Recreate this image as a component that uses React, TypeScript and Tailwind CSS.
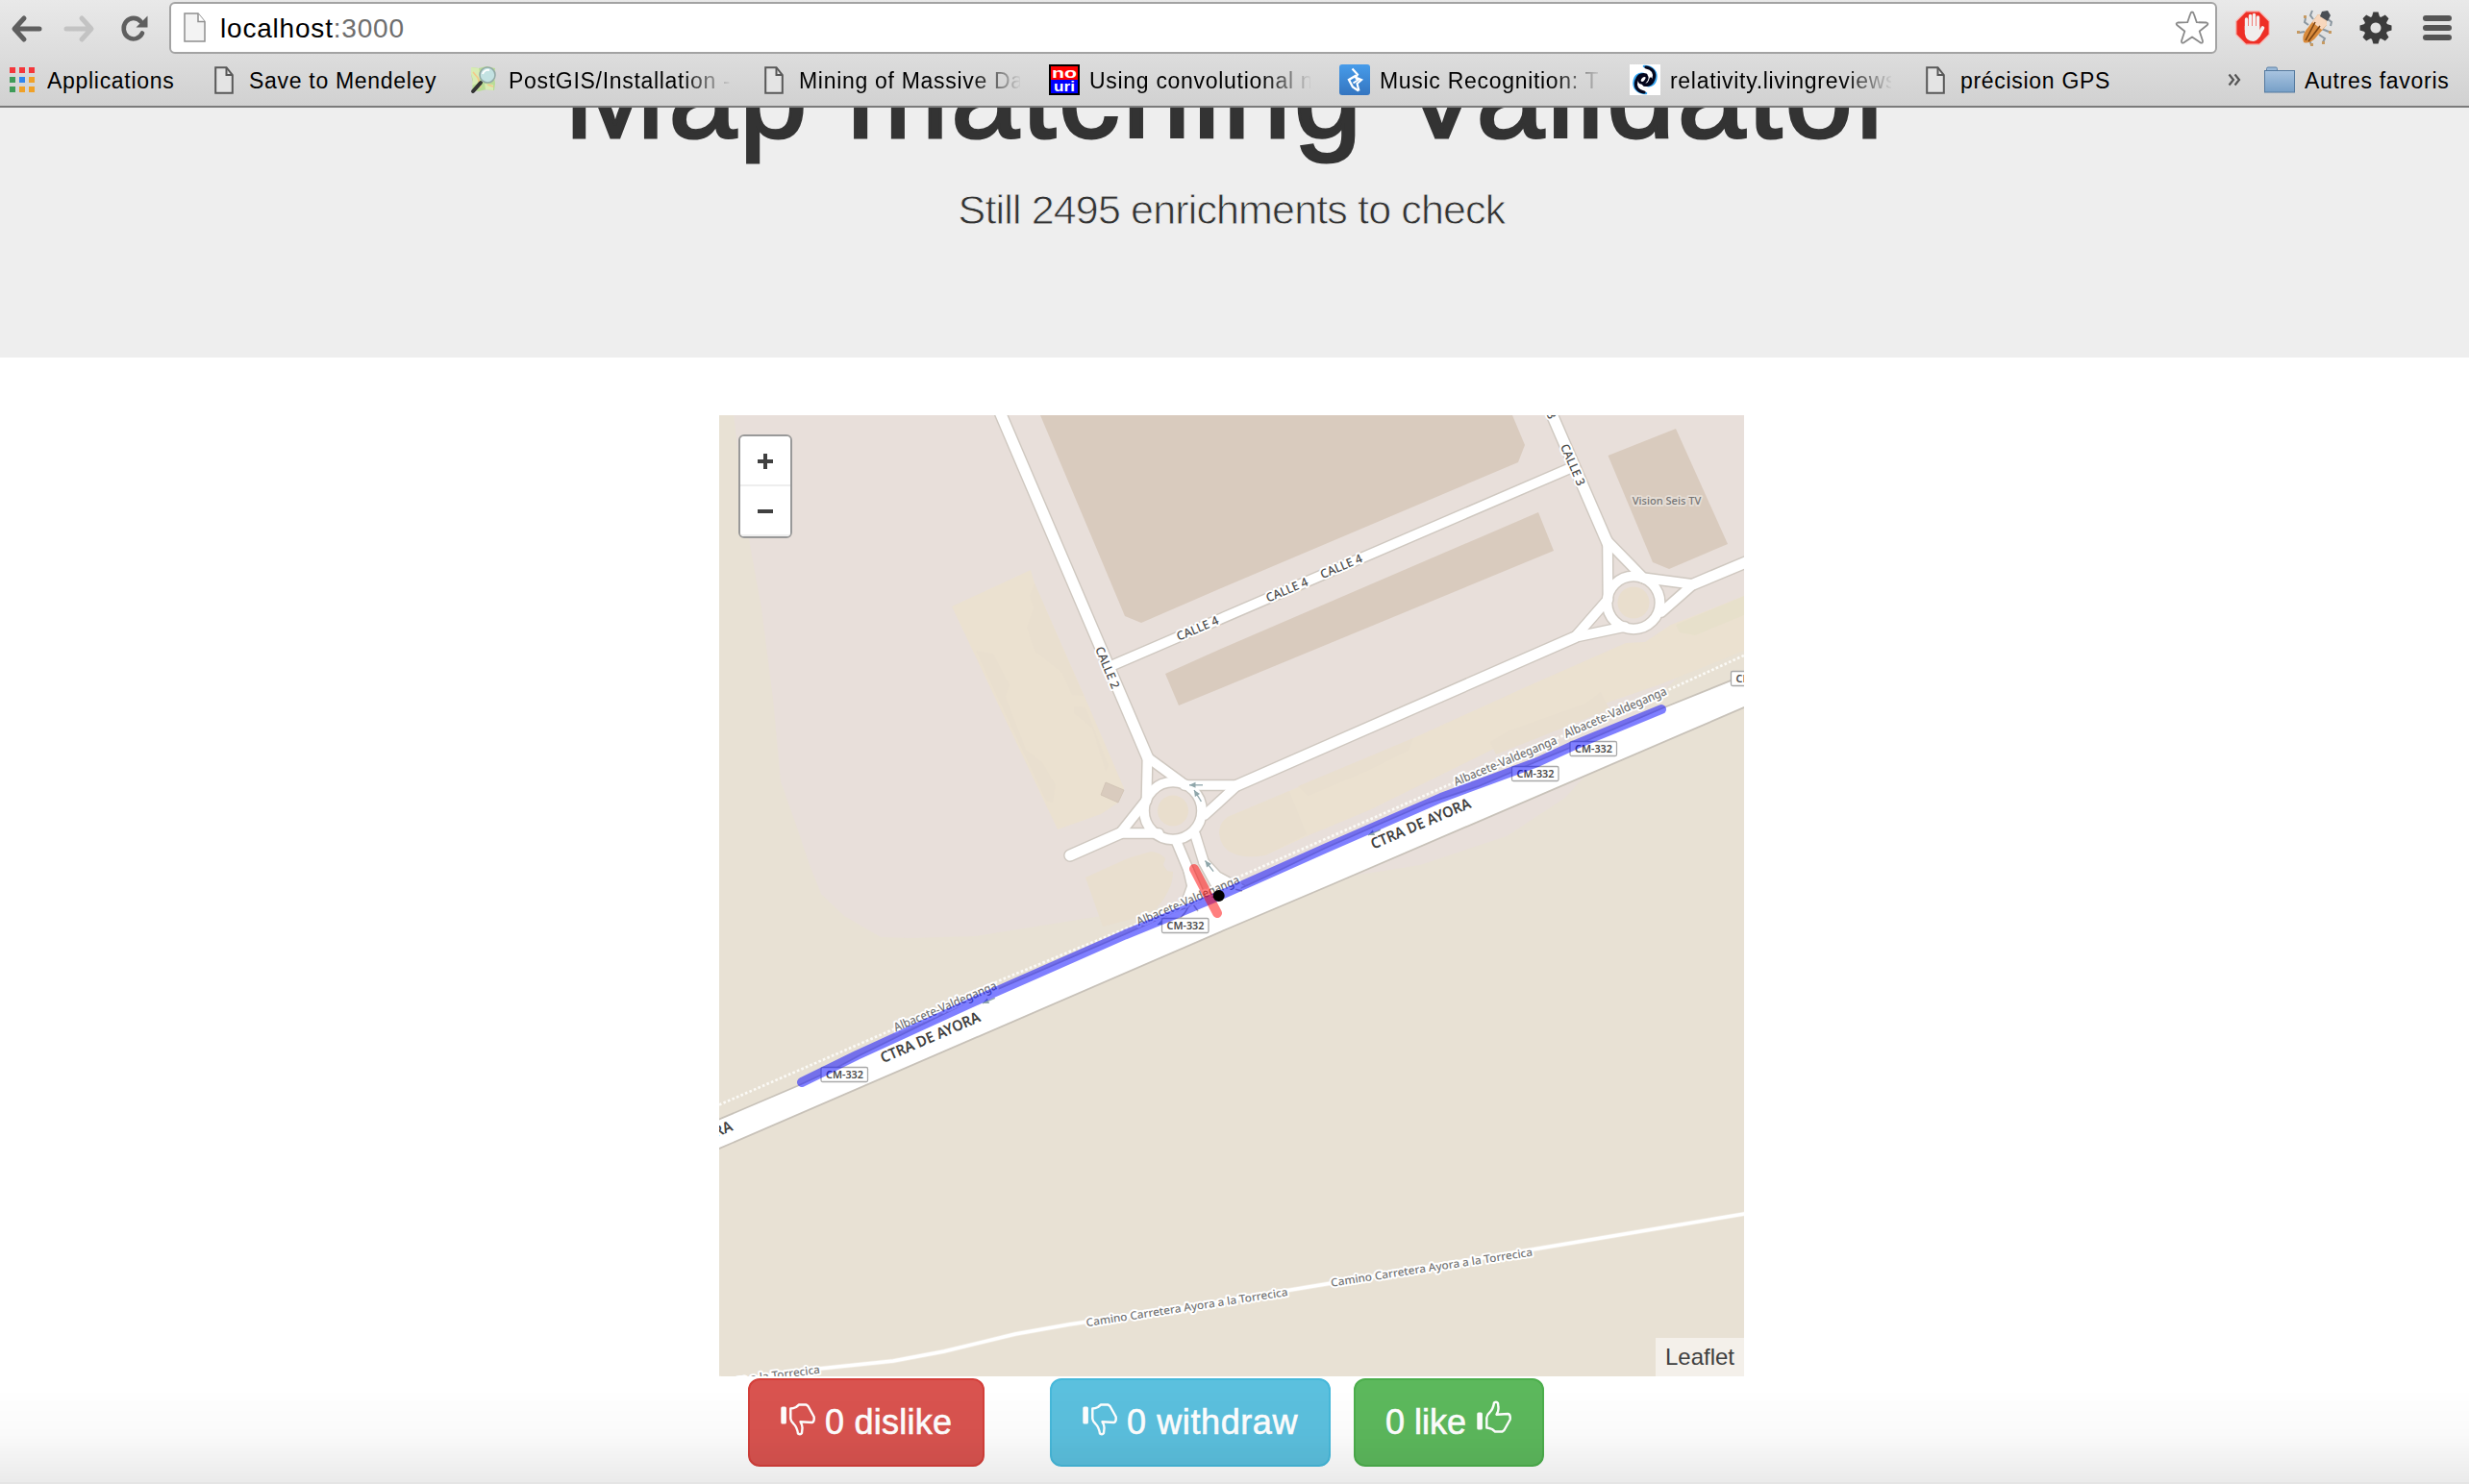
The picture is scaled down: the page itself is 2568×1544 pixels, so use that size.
import React from "react";

const SANS = "font-['Liberation_Sans',Arial,sans-serif]";

/* ---------- toolbar icons ---------- */

const DocIcon = () => (
  <svg width="20" height="29" viewBox="0 0 20 29" fill="#e4e4e4" stroke="#585858" strokeWidth="2">
    <path d="M1.2 1.2H12.5L18.8 9V27.8H1.2Z" />
    <path d="M12.5 1.2V9H18.8" fill="none" />
  </svg>
);

const AppsIcon = () => (
  <svg width="26" height="26" viewBox="0 0 26 26">
    {[
      ["#f4373b", "#f4373b", "#f4373b"],
      ["#3e9b58", "#2f86f0", "#f0a128"],
      ["#3e9b58", "#f0a128", "#f0a128"],
    ].map((row, r) =>
      row.map((c, i) => <rect key={`${r}-${i}`} x={i * 10} y={r * 10} width="6" height="6" fill={c} />),
    )}
  </svg>
);

const MapLensIcon = () => (
  <svg width="32" height="32" viewBox="0 0 32 32">
    <path d="M3 3l8 1 8-2 9 2-1 8 1 8-1 7-8-1-8 2-7-1 1-8-2-8z" fill="#b9dc95" />
    <path d="M3 3l8 1 2 8-4 8-5 2 1-6-2-6zM17 20l9 1v6l-8-1z" fill="#d8ecb4" />
    <path d="M5 8l5 6 3 10M20 21l6 2" stroke="#f4c98a" strokeWidth="1.6" fill="none" />
    <path d="M13 19L5 28" stroke="#333" strokeWidth="4" strokeLinecap="round" />
    <circle cx="20" cy="11" r="8" fill="#c3e2e6" fillOpacity="0.95" stroke="#93a9a6" strokeWidth="1.6" />
    <path d="M15 10a6 6 0 0 1 7-4" stroke="#fff" strokeWidth="2" fill="none" />
  </svg>
);

const NouriIcon = () => (
  <svg width="32" height="32" viewBox="0 0 32 32">
    <rect width="32" height="32" fill="#000" />
    <rect x="2" y="2" width="28" height="14" fill="#f00" />
    <rect x="2" y="16" width="28" height="14" fill="#00f" />
    <g fill="#fff" fontFamily="Liberation Sans" fontWeight="700">
      <text x="3" y="13.500" fontSize="15" textLength="26" lengthAdjust="spacingAndGlyphs">no</text>
      <text x="5" y="27.500" fontSize="14" textLength="22" lengthAdjust="spacingAndGlyphs">uri</text>
    </g>
  </svg>
);

const MusicIcon = () => (
  <svg width="32" height="32" viewBox="0 0 32 32">
    <defs>
      <linearGradient id="mus" x1="0" y1="0" x2="0" y2="1">
        <stop offset="0" stopColor="#479cea" />
        <stop offset="1" stopColor="#3475c0" />
      </linearGradient>
    </defs>
    <rect width="32" height="32" rx="3" fill="url(#mus)" />
    <path d="M13.500 4.500L19 10.500L17 13.500L23 16L18.500 20L20.500 27.500" fill="none" stroke="#fff" strokeWidth="2.200" />
    <path d="M17.500 11.500L10 16L14 23.500L20 27.500" fill="none" stroke="#fff" strokeWidth="2.400" />
    <path d="M17 14.500L19.500 16L14.500 19.500" fill="none" stroke="#fff" strokeWidth="2" />
  </svg>
);

const SwirlIcon = () => (
  <svg width="32" height="32" viewBox="0 0 32 32">
    <rect width="32" height="32" fill="#fff" />
    <g fill="none" strokeLinecap="round">
      <path d="M15 2c9 0 14 6 12 14-2 7-8 7-11 5" stroke="#35a6f2" strokeWidth="2.6" />
      <path d="M17 30C8 30 3 24 5 16c2-7 8-7 11-5" stroke="#35a6f2" strokeWidth="2.6" />
      <path d="M17 3c7 1 10 6 8 12-2 6-6 7-10 6" stroke="#04061c" strokeWidth="3.2" />
      <path d="M15 29c-7-1-10-6-8-12 2-6 6-7 10-6" stroke="#04061c" strokeWidth="3.2" />
      <path d="M10 17c1-5 5-6 7-5s1 4-1 6-5 2-6-1zM22 15c-1 5-4 7-7 6" stroke="#04061c" strokeWidth="3" />
    </g>
  </svg>
);

const FolderIcon = () => (
  <svg width="32" height="28" viewBox="0 0 32 28">
    <defs>
      <linearGradient id="fold" x1="0" y1="0" x2="0" y2="1">
        <stop offset="0" stopColor="#a9c4e0" />
        <stop offset="1" stopColor="#769fc7" />
      </linearGradient>
    </defs>
    <path d="M2.5 5V2.5Q2.5 1 4 1H12Q13.5 1 13.5 2.500V5" fill="#9bb9d8" stroke="#5f83a8" />
    <rect x="0.5" y="4.500" width="31" height="22.500" fill="url(#fold)" stroke="#557a9f" />
  </svg>
);

const Bug = () => (
  <svg width="40" height="40" viewBox="0 0 40 40">
    <g stroke="#8b97a0" strokeWidth="2" fill="none">
      <path d="M13 17l-4-3 1-4M18 11l-3-4 2-5M9 24l-6 1M14 32l2 6M24 27l6 4-2 4M27 21l7 3M32 10l5 4-1 4" />
    </g>
    <path d="M23 6q10 2 9 11L19 32q-6 5-11 3-2-6 2-12z" fill="#d98b3c" />
    <path d="M23 6q10 2 9 11l-5 5-10-8z" fill="#f7d7bd" />
    <path d="M20 14L10 33M25 18L13 34" stroke="#7a4413" strokeWidth="1.600" />
    <path d="M27 3l6-1 3 5-3 6-8-5z" fill="#4a4f55" />
    <g fill="#c69a62">
      <rect x="1" y="23" width="3" height="3" />
      <rect x="15" y="36" width="3" height="3" />
      <rect x="27" y="34" width="3" height="3" />
      <rect x="34" y="23" width="3" height="3" />
      <rect x="8" y="7" width="3" height="3" />
    </g>
  </svg>
);

const Gear = () => (
  <svg width="34" height="34" viewBox="-17 -17 34 34">
    <g fill="#3c3c3c">
      {[0, 45, 90, 135, 180, 225, 270, 315].map((a) => (
        <path key={a} d="M-4.500 -10L-2.600 -16.500H2.600L4.500 -10Z" transform={`rotate(${a})`} />
      ))}
      <path fillRule="evenodd" d="M0-12.500a12.500 12.500 0 1 0 .01 0ZM0-5.500a5.500 5.500 0 1 1-.01 0Z" />
    </g>
  </svg>
);

const Hand = () => (
  <svg width="36" height="36" viewBox="0 0 36 36">
    <path d="M11 .8H25L35.200 11V25L25 35.200H11L.8 25V11Z" fill="#ee2f26" stroke="#f8b8b4" strokeWidth="1.200" />
    <g stroke="#f3f1f0" strokeWidth="3.400" strokeLinecap="round" fill="none">
      <path d="M11.500 9V20M15.500 5.500V18M19.500 4.500V18M23.500 7V20" />
      <path d="M28.500 18L24 26" strokeWidth="3.600" />
    </g>
    <path d="M9.800 16H25.200V22L28 20Q25 31 19 32Q11 32 9.800 24Z" fill="#f0eeed" />
  </svg>
);

/* ---------- bookmark bar ---------- */

const BOOKMARKS = [
  { label: "PostGIS/Installation -", icon: <MapLensIcon />, fade: true },
  { label: "Mining of Massive Dat", icon: <DocIcon />, fade: true },
  { label: "Using convolutional n", icon: <NouriIcon />, fade: true },
  { label: "Music Recognition: T", icon: <MusicIcon />, fade: true },
  { label: "relativity.livingreviews", icon: <SwirlIcon />, fade: true },
  { label: "précision GPS", icon: <DocIcon />, fade: false },
];

const FADE = "[mask-image:linear-gradient(to_right,black_78%,transparent_101%)]";

function Bookmark({ icon, label, width, fade }: { icon: React.ReactNode; label: string; width: string; fade?: boolean }) {
  return (
    <div className={`flex shrink-0 items-center ${width}`}>
      <span className="flex w-8 shrink-0 justify-center">{icon}</span>
      <span
        className={`mt-0.5 ml-2.5 overflow-hidden text-[23px] leading-8 tracking-[0.7px] whitespace-nowrap text-black ${fade ? `w-[230px] ${FADE}` : ""}`}
      >
        {label}
      </span>
    </div>
  );
}

function BrowserChrome() {
  return (
    <header className="flex h-28 shrink-0 flex-col border-b-2 border-[#7b7b7b] bg-linear-to-b from-[#e9e9e9] to-[#d1d1d1]">
      <div className="flex h-14 items-start">
        <div className="flex h-14 w-44 items-center pt-1 pl-[11px]">
          <svg width="34" height="30" viewBox="0 0 34 30" fill="none" stroke="#5f5f5f" strokeWidth="5" strokeLinecap="round" strokeLinejoin="round">
            <path d="M14 4L4 15L14 26M4.500 15H30" />
          </svg>
          <svg className="ml-5" width="34" height="30" viewBox="0 0 34 30" fill="none" stroke="#c3c3c3" strokeWidth="5" strokeLinecap="round" strokeLinejoin="round">
            <path d="M20 4L30 15L20 26M29.500 15H4" />
          </svg>
          <svg className="ml-[26px]" width="30" height="30" viewBox="0 0 30 30">
            <path d="M23 19.500A10.200 10.800 0 1 1 21.500 7.500" fill="none" stroke="#5f5f5f" strokeWidth="4.600" strokeLinecap="round" />
            <path d="M28.500 1.500V13.500H16.500Z" fill="#5f5f5f" />
          </svg>
        </div>
        <div className="mt-0.5 flex h-[54px] w-[2130px] items-center rounded-md border-2 border-[#a3a3a3] bg-white pl-[13px]">
          <svg width="24" height="32" viewBox="0 0 24 32" fill="#f3f3f3" stroke="#8f8f8f" strokeWidth="1.500">
            <path d="M1 1H15L22 9.500V30H1Z" />
            <path d="M15 1V9.500H22" fill="#fff" />
          </svg>
          <span className="mt-0.5 ml-3.5 text-[28px] leading-8 tracking-[0.8px] text-black">
            localhost<span className="text-[#6e6e6e]">:3000</span>
          </span>
          <svg className="mr-1.5 ml-auto" width="36" height="36" viewBox="0 0 36 36" fill="#fff" stroke="#8a8a8a" strokeWidth="1.800" strokeLinejoin="round">
            <path d="M18 1.500Q19.300 1.500 20 4L22.800 12.200L33 12.500Q35.500 13.200 33.500 15.300L25.700 21.500L29 31.500Q29.300 34.500 26.500 33.300L18 27.500L9.500 33.300Q6.700 34.500 7 31.500L10.300 21.500L2.500 15.300Q.5 13.200 3 12.500L13.200 12.200L16 4Q16.700 1.500 18 1.500Z" />
          </svg>
        </div>
        <div className="flex h-14 flex-1 items-center pt-0.5 pl-[19px]">
          <Hand />
          <span className="ml-[27px]"><Bug /></span>
          <span className="ml-[26px]"><Gear /></span>
          <span className="ml-8 flex w-[30px] flex-col gap-1">
            <i className="h-1.5 rounded-full bg-[#555]" />
            <i className="h-1.5 rounded-full bg-[#555]" />
            <i className="h-1.5 rounded-full bg-[#555]" />
          </span>
        </div>
      </div>
      <nav className="flex h-[54px] items-center pl-[7px]">
        <Bookmark icon={<AppsIcon />} label="Applications" width="w-[210px]" />
        <Bookmark icon={<DocIcon />} label="Save to Mendeley" width="w-[270px]" />
        {BOOKMARKS.map((b) => (
          <Bookmark key={b.label} icon={b.icon} label={b.label} fade={b.fade} width="w-[302px]" />
        ))}
        <svg className="ml-[18px]" width="14" height="14" viewBox="0 0 14 14" fill="none" stroke="#555" strokeWidth="2.200">
          <path d="M1.500 1.500L6 7L1.500 12.500M7.500 1.500L12 7L7.500 12.500" />
        </svg>
        <div className="ml-6 flex">
          <Bookmark icon={<FolderIcon />} label="Autres favoris" width="w-[213px]" />
        </div>
      </nav>
    </header>
  );
}

/* ---------- map ---------- */

type LabelProps = {
  x: number;
  y: number;
  a: number;
  len: number;
  size: number;
  children: string;
  color?: string;
  weight?: number;
  halo?: string;
};

function Label({ x, y, a, len, size, children, color = "#4b4b4b", weight = 500, halo = "#fff" }: LabelProps) {
  return (
    <text
      transform={`translate(${x} ${y}) rotate(${a})`}
      y={size * 0.36}
      textAnchor="middle"
      fontSize={size}
      fontWeight={weight}
      textLength={len}
      lengthAdjust="spacingAndGlyphs"
      fill={color}
      stroke={halo}
      strokeWidth="4"
      strokeLinejoin="round"
      paintOrder="stroke"
    >
      {children}
    </text>
  );
}

const WIDE = [
  "M1038 424L1193.500 788",
  "M1287 817L1638 663",
  "M1113 890L1165 867",
  "M1611 424L1672 565",
  "M1761 608L1830 579",
];
const MID = [
  "M1153 694L1638 485",
  "M1193.500 788L1192.500 833",
  "M1193.500 788L1229 814",
  "M1287 817H1232",
  "M1287 817L1253 848",
  "M1165 867L1192 833",
  "M1165 867H1205",
  "M1223 874L1236 905L1240 922L1230 950",
  "M1236 905L1256 950",
  "M1243 868L1252 897L1266 912L1292 926",
  "M1252 897L1270 930",
  "M1672 563L1672.500 624",
  "M1672 563L1710 602",
  "M1708 601L1761 608L1728 637",
  "M1638 663L1672 624",
  "M1638 663L1690 652",
];

const UPPER = "M740 1168L829 1130L869 1111.500L895 1097.500L1009 1041.500L1170 972L1220 949.500L1293 923L1316 912.500L1377 883L1431 859L1484 836L1538 818L1599 792L1640 775L1731 736L1820 700";
const LOWER = "M740 1198.500L1280 965L1386 920L1820 733.500";

const SHIELDS: [number, number][] = [
  [854, 1110.500],
  [1208.500, 955.500],
  [1572.500, 797.500],
  [1633, 771.500],
];

function Arrow({ x, y, a, c = "#8fa6aa" }: { x: number; y: number; a: number; c?: string }) {
  return (
    <g transform={`translate(${x} ${y}) rotate(${a})`}>
      <path d="M0 0H14" stroke={c} strokeWidth="1.300" />
      <path d="M0 0L6.500 -3V3Z" fill={c} />
    </g>
  );
}

function MapDrawing() {
  return (
    <svg className="block" width="1066" height="1000" viewBox="748 432 1066 1000" fontFamily="'Noto Sans', 'Open Sans', sans-serif">
      <rect x="748" y="432" width="1066" height="1000" fill="#e8e1d4" />
      <path
        d="M763 432L780 567L792 633L804 727L812 813L831 867L842 900L854 930L878 953L916 975L947 976L1015 974L1146 953L1433 907L1477 900L1567 870L1628 830L1700 750L1814 635V432Z"
        fill="#e8dfda"
      />
      <g fill="#ebe1d0">
        <path d="M990 631L1072 593L1076 607L1129 727L1169 820L1163 835L1145 847L1100 863Z" />
        <path d="M1268 867L1270 858L1277 850L1341 823L1470 768L1591 713L1691 669L1711 668L1738 650L1814 620V677L1727 712L1666 733L1552 780L1424 843L1359 870L1316 890L1295 891L1277 882Z" />
      </g>
      <g fill="#e9dfcf">
        <path d="M1129 913L1173 893L1197 886Q1207 887 1212 893L1210 900L1214 906L1220 907Q1220 918 1215 927Q1207 944 1193 952L1147 964Z" />
        <path d="M1268 867Q1268 856 1277 850L1341 823L1359 868L1316 890Q1302 892 1295 891Q1270 888 1268 867Z" />
        <path d="M1076 607L1071 620L1075 633L1068 653L1076 677L1105 700L1115 723L1127 724Z" />
        <path d="M1015 677L1033 680L1050 713L1046 725L1067 780L1084 793L1098 817L1095 835L1088 833Z" />
        <path d="M1117 735L1129 736L1153 797L1150 803L1136 757L1117 742Z" />
        <path d="M1550 772L1570 760L1649 732L1665 720L1674 738L1556 785Z" />
        <path d="M1350 818L1470 768L1466 780L1420 803L1361 828Z" />
      </g>
      <path d="M1743 650L1814 620V640L1763 661L1747 658Z" fill="#e7e0cb" />

      <g fill="#d9cbbe">
        <path d="M1082 432L1136 560L1170 641L1187 648L1270 612L1579 481L1586 463L1573 432Z" />
        <path d="M1212 701L1226 734L1270 716L1616 573L1600 533L1270 675Z" />
        <path d="M1672.500 474L1743 446L1797 566L1736 592L1719 585Z" />
        <path d="M1150 814L1169 822L1163 835L1145 827Z" stroke="#cfc1b3" strokeWidth="0.800" />
      </g>

      <g fill="none" strokeLinecap="round" strokeLinejoin="round">
        <g stroke="#cfc8c0">
          <g strokeWidth="13.800">
            {WIDE.map((d) => <path key={d} d={d} />)}
          </g>
          <g strokeWidth="12.500">
            {MID.map((d) => <path key={d} d={d} />)}
            <circle cx="1220" cy="843.500" r="30" />
            <circle cx="1699" cy="627" r="27.500" />
          </g>
        </g>
        <path d="M1236 905L1256 950L1270 930L1252 900L1292 922L1292 940L1225 956L1240 925Z" fill="#fff" stroke="none" />
        <g stroke="#fff">
          <g strokeWidth="11">
            {WIDE.map((d) => <path key={d} d={d} />)}
          </g>
          <g strokeWidth="9.600">
            {MID.map((d) => <path key={d} d={d} />)}
            <circle cx="1220" cy="843.500" r="30" />
            <circle cx="1699" cy="627" r="27.500" />
          </g>
        </g>
      </g>
      <g fill="#e9decd">
        <circle cx="1220" cy="843.500" r="16" />
        <circle cx="1699" cy="627" r="16.500" />
      </g>

      <path d="M748 1149.500L929 1071L1040 1020L1181 962L1287 913L1506 817L1620 768L1737 717L1816 681" fill="none" stroke="#fbfaf6" strokeWidth="2.600" strokeDasharray="2.600 2.300" />

      <path d={`${UPPER}L1820 733.500L1386 920L1280 965L740 1198.500Z`} fill="#fff" />
      <g fill="none" stroke="#c8c2b9" strokeWidth="1.800">
        <path d={UPPER} />
        <path d={LOWER} />
      </g>
      <path d="M1234 945L1250 938L1292 920L1290 926L1262 942L1230 956Z" fill="#fff" />
      <path d="M1223 959Q1235 950 1238 938M1239 938L1246 948M1284 925L1292 927" fill="none" stroke="#b9b3aa" strokeWidth="1.500" />

      <path d="M1820 1262L1594 1300L1385 1335L1240 1359L1112 1378L1056 1388L982 1406L929 1416L852 1424L780 1434" fill="none" stroke="#f1ece3" strokeWidth="5" />
      <path d="M1820 1262L1594 1300L1385 1335L1240 1359L1112 1378L1056 1388L982 1406L929 1416L852 1424L780 1434" fill="none" stroke="#fff" strokeWidth="3.400" />

      <Arrow x={1237} y={816.800} a={0} />
      <Arrow x={1242} y={822} a={58} />
      <Arrow x={1253.500} y={895.500} a={52} />
      <Arrow x={1022} y={1044} a={-24} />
      <Arrow x={1204} y={962} a={-24} />
      <Arrow x={1423} y={869} a={-24} />

      <Label x={1152} y={694.600} a={67.300} len={46} size={12.500}>CALLE 2</Label>
      <Label x={1245.500} y={653.700} a={-23} len={46} size={12.500}>CALLE 4</Label>
      <Label x={1338.500} y={613.500} a={-23} len={46} size={12.500}>CALLE 4</Label>
      <Label x={1395} y={589} a={-23} len={46} size={12.500}>CALLE 4</Label>
      <Label x={1636} y={483.500} a={66.500} len={46} size={12.500}>CALLE 3</Label>
      <Label x={1606} y={414} a={66.500} len={46} size={12.500}>CALLE 3</Label>
      <Label x={1733.500} y={520.700} a={0} len={71.500} size={11.500} color="#757575" halo="#e5ddd5">Vision Seis TV</Label>
      <Label x={983} y={1047} a={-22.900} len={115} size={12.500} color="#747474">Albacete-Valdeganga</Label>
      <Label x={1235.500} y={937} a={-23} len={115} size={12.500} color="#747474">Albacete-Valdeganga</Label>
      <Label x={1565.500} y={791.500} a={-22.800} len={115} size={12.500} color="#747474">Albacete-Valdeganga</Label>
      <Label x={1680} y={741} a={-23.400} len={115} size={12.500} color="#747474">Albacete-Valdeganga</Label>
      <Label x={967.500} y={1079} a={-23.400} len={111.500} size={15.500} weight={650} color="#404040">CTRA DE AYORA</Label>
      <Label x={1477.500} y={856.600} a={-23.200} len={111.500} size={15.500} weight={650} color="#404040">CTRA DE AYORA</Label>
      <Label x={709.500} y={1192.500} a={-23.200} len={111.500} size={15.500} weight={650} color="#404040">CTRA DE AYORA</Label>
      <Label x={1234.500} y={1360} a={-8.700} len={212} size={11.500} color="#747474">Camino Carretera Ayora a la Torrecica</Label>
      <Label x={1489} y={1318.500} a={-8.700} len={212} size={11.500} color="#747474">Camino Carretera Ayora a la Torrecica</Label>
      <Label x={748.500} y={1438} a={-7.300} len={210} size={11.500} color="#747474">Camino Carretera Ayora a la Torrecica</Label>

      {[...SHIELDS, [1800.500, 698.500] as [number, number]].map(([x, y]) => (
        <g key={x}>
          <rect x={x} y={y} width="48.500" height="15" rx="1.500" fill="#fff" stroke="#a9a9a9" strokeWidth="1.300" />
          <text x={x + 24.500} y={y + 11.700} fontSize="11.500" fontWeight="600" textAnchor="middle" textLength="39" lengthAdjust="spacingAndGlyphs" fill="#4a4a4a">
            CM-332
          </text>
        </g>
      ))}

      <g fill="none" strokeWidth="10" strokeLinecap="round" strokeLinejoin="round" strokeOpacity="0.5">
        <path d="M834 1126L891 1098L1033 1033L1170 972.500L1220 952L1268 932L1380 882L1499 830L1599 793L1638 775L1728 738" stroke="#0000ff" />
        <path d="M1242 904L1266 950" stroke="#ff0000" />
      </g>
      <circle cx="1267.700" cy="932" r="6" fill="#000" />
    </svg>
  );
}

function MapView() {
  return (
    <div className="relative h-[1000px] w-[1066px] overflow-hidden">
      <MapDrawing />
      <div className="absolute top-5 left-5 flex w-14 flex-col overflow-hidden rounded-md border-2 border-[#999]">
        <button className="flex h-[52px] items-center justify-center border-b-2 border-[#eee] bg-white pt-0.5">
          <svg width="16" height="16" viewBox="0 0 16 16" stroke="#404040" strokeWidth="4">
            <path d="M0 8H16M8 0V16" />
          </svg>
        </button>
        <button className="flex h-[52px] items-center justify-center border-b-2 border-[#eee] bg-white pt-0.5">
          <svg width="16" height="16" viewBox="0 0 16 16" stroke="#404040" strokeWidth="4">
            <path d="M0 8H16" />
          </svg>
        </button>
      </div>
      <div className="absolute right-0 bottom-0 flex h-10 w-[92px] items-center justify-center bg-white/50 text-2xl text-[#404040]">
        Leaflet
      </div>
    </div>
  );
}

/* ---------- vote buttons ---------- */

const Thumb = ({ className }: { className: string }) => (
  <svg className={className} width="36" height="34" viewBox="0 0 36 34">
    <rect x="0.300" y="3.500" width="5.600" height="18" rx="1.600" fill="#fff" />
    <path
      d="M10.300 5.500Q13 5.400 16 4L19 1.500H26.500L28.500 3L34.600 14Q35.300 19.500 32.500 20L20.500 19.300Q23 23 22.400 27L22 31Q20.500 33.200 18 31.500Q17 25 13.500 21.500Q10.500 19 10.300 16Z"
      fill="none"
      stroke="#fff"
      strokeWidth="2.400"
      strokeLinejoin="round"
    />
  </svg>
);

const BTN = "flex h-[92px] items-center rounded-xl border-2 text-4xl leading-none whitespace-nowrap text-white [-webkit-text-stroke:0.6px_white]";

export default function App() {
  return (
    <div className={`relative flex h-[1544px] w-full flex-col overflow-hidden bg-white ${SANS}`}>
      <BrowserChrome />
      <section className="flex h-[260px] shrink-0 flex-col items-center overflow-hidden bg-[#eee] pr-1.5 text-[#333]">
        <h1 className="-mt-[76px] shrink-0 text-[127px] leading-[126px] tracking-[2.9px] whitespace-nowrap [-webkit-text-stroke:3px_#333]">
          Map matching Validator
        </h1>
        <p className="mt-[26px] text-[43px] leading-[60px] tracking-[-0.85px] [-webkit-text-stroke:0.8px_#eee]">
          Still 2495 enrichments to check
        </p>
      </section>
      <main className="flex flex-col pt-[60px] pl-[748px]">
        <MapView />
        <div className="mt-0.5 flex pl-[30px]">
          <button className={`${BTN} w-[246px] border-[#d43f3a] bg-[#d9534f] pl-8 tracking-[0.25px]`}>
            <Thumb className="mr-2.5 -mt-1.5" />0 dislike
          </button>
          <button className={`${BTN} ml-[68px] w-[292px] border-[#46b8da] bg-[#5bc0de] pl-8 tracking-[0.6px]`}>
            <Thumb className="mr-2.5 -mt-1.5" />0 withdraw
          </button>
          <button className={`${BTN} ml-6 w-[198px] border-[#4cae4c] bg-[#5cb85c] pl-[31px]`}>
            0 like
            <Thumb className="-mt-3 ml-[11px] -scale-y-100" />
          </button>
        </div>
      </main>
      <div className="pointer-events-none absolute inset-x-0 bottom-0 h-[100px] border-b-2 border-black/10 bg-linear-to-b from-transparent via-black/2 to-black/8" />
    </div>
  );
}
